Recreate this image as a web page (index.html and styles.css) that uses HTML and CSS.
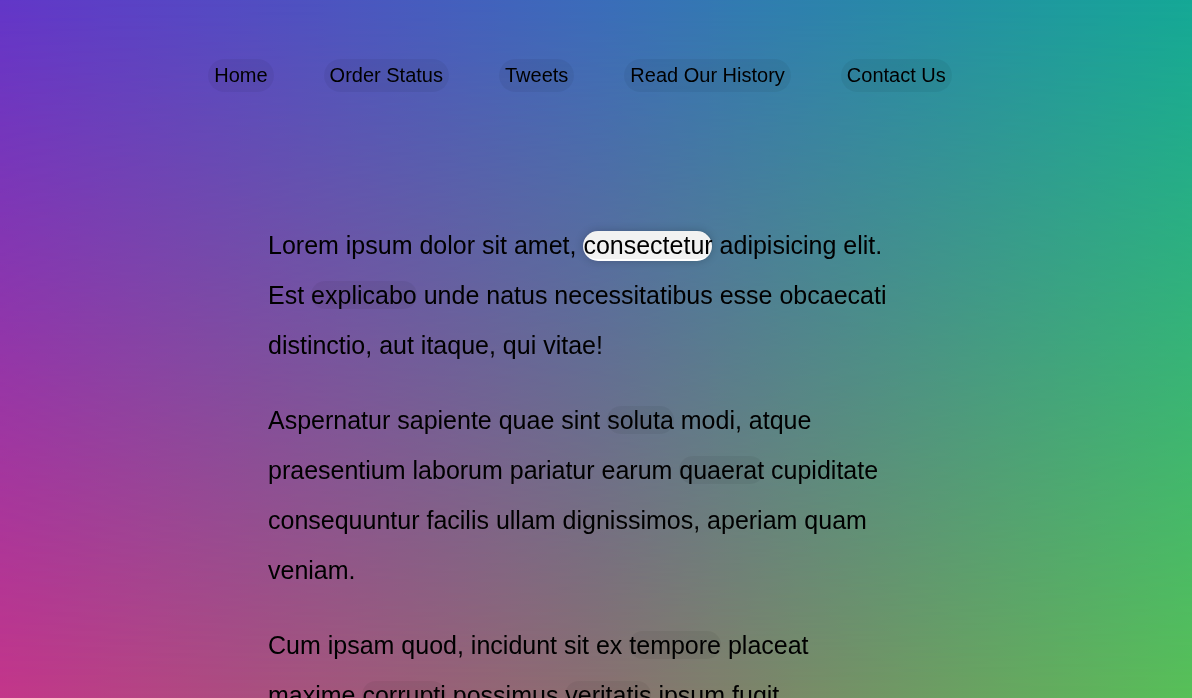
FILE: index.html
```html
<!DOCTYPE html>
<html lang="en">
<head>
<meta charset="UTF-8">
<title>Follow Along Nav</title>
<link rel="stylesheet" href="styles.css">
</head>
<body>
<div class="backdrop"></div>
<div class="page">
  <nav>
    <ul class="menu">
      <li><a href="#">Home</a></li>
      <li><a href="#">Order Status</a></li>
      <li><a href="#">Tweets</a></li>
      <li><a href="#">Read Our History</a></li>
      <li><a href="#">Contact Us</a></li>
    </ul>
  </nav>

  <div class="wrapper">
    <p>Lorem ipsum dolor sit amet, <a href="#" class="active">consectetur</a> adipisicing elit. Est <a href="#">explicabo</a> unde natus necessitatibus esse obcaecati distinctio, aut itaque, qui vitae!</p>
    <p>Aspernatur sapiente quae sint <a href="#">soluta</a> modi, atque praesentium laborum pariatur earum <a href="#">quaerat</a> cupiditate consequuntur facilis ullam dignissimos, aperiam quam veniam.</p>
    <p>Cum ipsam quod, incidunt sit ex <a href="#">tempore</a> placeat maxime <a href="#">corrupti</a> possimus <a href="#">veritatis</a> ipsum fugit recusandae est doloremque? Hic, <a href="#">quibusdam</a>, nulla.</p>
    <p>Esse quibusdam, ad, ducimus cupiditate <a href="#">nulla</a>, quae magni odit <a href="#">totam</a> ut consequatur eveniet sunt quam provident sapiente dicta neque quod.</p>
    <p>Aliquam <a href="#">dicta</a> sequi culpa fugiat <a href="#">consequuntur</a> pariatur optio ad minima, maxime <a href="#">odio</a>, distinctio magni impedit tempore enim repellendus <a href="#">repudiandae</a> quas!</p>
  </div>
</div>
</body>
</html>
```

FILE: styles.css
```css
html {
  box-sizing: border-box;
}

*, *::before, *::after {
  box-sizing: inherit;
}

body {
  margin: 0;
  min-height: 100vh;
  font-family: "Liberation Sans", Arial, sans-serif;
  color: #000;
  background: linear-gradient(to right, #c4368a 0%, #58c058 100%);
}

.backdrop {
  position: fixed;
  inset: 0;
  z-index: -2;
  background: linear-gradient(to right, #c4368a 0%, #8a7070 50%, #58c058 100%);
}

.backdrop::before {
  content: "";
  position: absolute;
  inset: 0;
  background: linear-gradient(to right, #6236c8 0%, #3a6cba 50%, #14a896 100%);
  -webkit-mask-image: linear-gradient(to bottom, #000 0%, rgba(0,0,0,0) 100%);
  mask-image: linear-gradient(to bottom, #000 0%, rgba(0,0,0,0) 100%);
}

.page {
  width: 1160px;
}

.menu {
  display: flex;
  justify-content: center;
  list-style: none;
  padding: 0;
  margin: 59px 0 128px;
  font-size: 20px;
  line-height: 23px;
}

.menu a {
  display: inline-block;
  padding: 5px 6px;
  margin: 0 25px;
}

a {
  text-decoration: none;
  color: #000;
  background: rgba(0, 0, 0, 0.05);
  border-radius: 20px;
}

.wrapper {
  margin: 0 auto;
  max-width: 624px;
  font-size: 25px;
  line-height: 2;
}

.wrapper p {
  margin: 25px 0;
}

.active {
  position: relative;
  z-index: 0;
}

.active::before {
  content: "";
  position: absolute;
  left: 0;
  right: 1px;
  top: 0;
  bottom: -2px;
  z-index: -1;
  background: #fff;
  border-radius: 20px;
  box-shadow: 0 0 10px rgba(0, 0, 0, 0.2);
}
```
